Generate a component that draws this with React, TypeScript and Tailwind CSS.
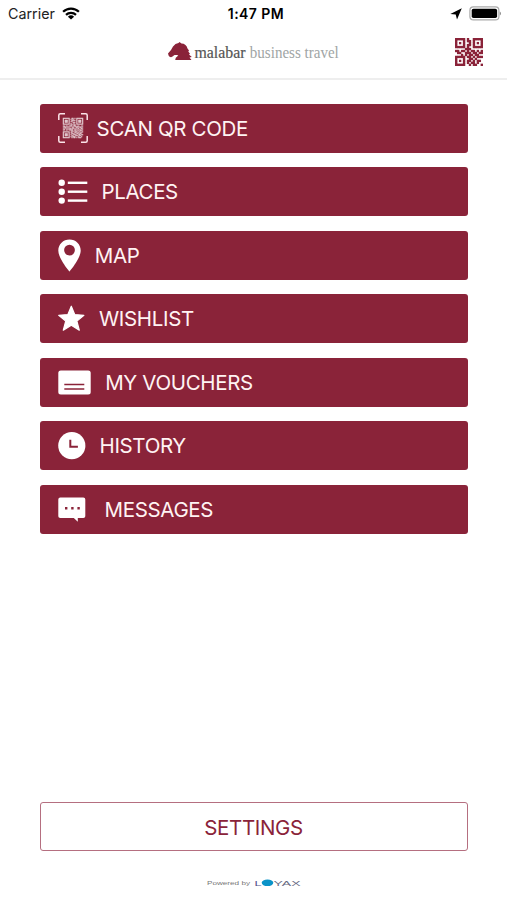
import type { ReactNode } from "react";

const SCAN_ROWS = [
  "111111100110101111111",
  "100000101010001000001",
  "101110100111101011101",
  "101110101100001011101",
  "101110100011101011101",
  "100000101001001000001",
  "111111101010101111111",
  "000000001101100000000",
  "110110111001110110011",
  "011001000110011101100",
  "101110110011001010111",
  "010001011110110110010",
  "110110110100101001101",
  "000000001110110110110",
  "111111100101011001001",
  "100000101100110110110",
  "101110100111001101100",
  "101110101001110011011",
  "101110100110011101100",
  "100000101011100010010",
  "111111100101101011100",
];

const HEADER_ROWS = [
  "11111010011111",
  "10001011010001",
  "10101001010101",
  "10001011010001",
  "11111010011111",
  "00000111000000",
  "11011010110101",
  "01100111011011",
  "00010101101100",
  "11111011010111",
  "10001001101000",
  "10101011010110",
  "10001010110100",
  "11111001011001",
];

function QrModules({ rows, size = 1.04 }: { rows: string[]; size?: number }) {
  return (
    <>
      {rows.map((row, y) =>
        row.split("").map((cell, x) =>
          cell === "1" ? <rect key={`${x}-${y}`} x={x} y={y} width={size} height={size} /> : null
        )
      )}
    </>
  );
}

function ScanIcon() {
  return (
    <svg width="30" height="30" viewBox="0 0 30 30" fill="white">
      <path
        d="M.8 7V2.3Q.8.8 2.3.8H7M23 .8h4.700q1.500 0 1.500 1.500V7M29.200 23v4.700q0 1.500-1.500 1.500H23M7 29.200H2.300Q.8 29.200.8 27.700V23"
        fill="none"
        stroke="#fbe3e8"
        strokeWidth="1.500"
      />
      <g transform="translate(4.800 4.800) scale(.97)">
        <QrModules rows={SCAN_ROWS} />
      </g>
    </svg>
  );
}

function ListIcon() {
  return (
    <svg width="30" height="26" viewBox="0 0 30 26" fill="white">
      {[3.8, 12.7, 21.6].map((y) => (
        <g key={y}>
          <circle cx="3.700" cy={y} r="3.200" />
          <rect x="9.800" y={y - 1.2} width="19.500" height="2.400" />
        </g>
      ))}
    </svg>
  );
}

function PinIcon() {
  return (
    <svg width="23" height="33" viewBox="0 0 23 33" fill="white">
      <path
        fillRule="evenodd"
        d="M11.500.5C5.200.5.300 5.400.300 11.500.300 19.500 11.500 32.500 11.500 32.500S22.700 19.500 22.700 11.500C22.700 5.400 17.800.5 11.500.5Zm0 5.200a5.400 5.400 0 1 1 0 10.800 5.400 5.400 0 0 1 0-10.800Z"
      />
    </svg>
  );
}

function StarIcon() {
  return (
    <svg width="27" height="27" viewBox="0 0 27 27" fill="white" stroke="white" strokeWidth="1.200" strokeLinejoin="round">
      <path d="M13.300 1.200 16.700 9.600 25.900 10.300 18.900 16.100 21.300 25.200 13.300 20.300 5.300 25.200 7.700 16.100.7 10.300 9.900 9.600Z" />
    </svg>
  );
}

function VoucherIcon() {
  return (
    <svg width="33" height="25" viewBox="0 0 33 25">
      <rect x=".3" y=".6" width="32.400" height="23.800" rx="2.500" fill="white" />
      <path d="M6.300 14.500h20M6.300 19h20" stroke="#8a2339" strokeWidth="1.500" />
    </svg>
  );
}

function ClockIcon() {
  return (
    <svg width="28" height="28" viewBox="0 0 28 28">
      <circle cx="13.800" cy="13.700" r="13.600" fill="white" />
      <path d="M12.300 7.700v7h7.600" fill="none" stroke="#8a2339" strokeWidth="2" />
    </svg>
  );
}

function MessageIcon() {
  return (
    <svg width="28" height="25" viewBox="0 0 28 25">
      <path d="M2.300.5h23q2 0 2 2v16.700q0 1.800-2 1.800h-5.500v3.700L15.800 21H2.300Q.3 21 .3 19.200V2.500q0-2 2-2Z" fill="white" />
      <path d="M7 10h2.400v2.400H7zM13.200 10h2.400v2.400h-2.400zM19.400 10h2.400v2.400h-2.400z" fill="#8a2339" />
    </svg>
  );
}

type MenuItem = {
  label: string;
  icon: ReactNode;
  gap: string;
};

const menu: MenuItem[] = [
  { label: "SCAN QR CODE", icon: <ScanIcon />, gap: "gap-[8.6px]" },
  { label: "PLACES", icon: <ListIcon />, gap: "gap-[13.4px]" },
  { label: "MAP", icon: <PinIcon />, gap: "gap-[13.8px]" },
  { label: "WISHLIST", icon: <StarIcon />, gap: "gap-[14px]" },
  { label: "MY VOUCHERS", icon: <VoucherIcon />, gap: "gap-[14.2px]" },
  { label: "HISTORY", icon: <ClockIcon />, gap: "gap-[13.5px]" },
  { label: "MESSAGES", icon: <MessageIcon />, gap: "gap-[18.5px]" },
];

function StatusBar() {
  return (
    <div className="grid h-[27px] grid-cols-3 items-center pl-[8px] pr-[6px] text-black">
      <div className="flex items-center gap-[7px] pt-px text-[14.300px] leading-none text-[#222]">
        <span>Carrier</span>
        <svg width="18" height="13" viewBox="0 0 18 13" fill="none" stroke="black" strokeWidth="2.200">
          <path d="M1.100 4.800a11.300 11.300 0 0 1 15.800 0M4 7.900a7.200 7.200 0 0 1 10 0" />
          <path d="M9 12.600 5.900 9.700a4.600 4.600 0 0 1 6.200 0Z" fill="black" stroke="none" />
        </svg>
      </div>
      <div className="pt-px pl-[3px] text-center text-[14px] font-semibold leading-none tracking-[0.45px]">1:47 PM</div>
      <div className="flex items-center justify-end gap-[7px]">
        <svg width="12" height="12" viewBox="0 0 12 12">
          <path d="M11.800.3 7 11.500 5.700 6.600.3 5.900Z" />
        </svg>
        <svg width="32" height="15" viewBox="0 0 32 15">
          <rect x=".9" y=".9" width="29" height="13" rx="3.500" fill="white" stroke="#aaa" strokeWidth="1.200" />
          <rect x="2.700" y="2.700" width="25.400" height="9.400" rx="1.800" />
          <path d="M30.800 5.500v4q1-.7 1-2T30.800 5.500Z" fill="#777" />
        </svg>
      </div>
    </div>
  );
}

function Logo() {
  return (
    <svg width="175" height="24" viewBox="0 0 175 24" className="overflow-visible font-['Liberation_Serif',serif]">
      <path
        d="M1 13.500 4 10 6 6.500 8.500 4 11.500 3 12.500 2 14.500 3.500C17.500 3.500 20 5.500 20.500 8.500L22 10.500 21.300 11.500 23 13.700 22 14.400 24.800 17 22.500 17.500 24.500 20H8.200L8.800 17.800 11.300 15.500 10 15 7.500 15 5.500 16.600 4 17.200 2.600 16.800 1.700 15.700Z"
        fill="#8a2339"
      />
      <text x="27.500" y="17.800" fontSize="16.500" fill="#555" stroke="#555" strokeWidth=".2" textLength="51" lengthAdjust="spacingAndGlyphs">
        malabar
      </text>
      <text x="82.800" y="17.800" fontSize="16.500" fill="#a0a5a5" textLength="89" lengthAdjust="spacingAndGlyphs">
        business travel
      </text>
    </svg>
  );
}

function PoweredBy() {
  return (
    <svg width="96" height="10" viewBox="0 0 96 10" className="font-['Liberation_Sans',sans-serif]">
      <text x="1" y="7.300" fontSize="6" fill="#777" textLength="43" lengthAdjust="spacingAndGlyphs">
        Powered by
      </text>
      <text x="48.500" y="7.800" fontSize="8" fill="#55558a" textLength="7" lengthAdjust="spacingAndGlyphs">
        L
      </text>
      <ellipse cx="61.500" cy="4.800" rx="5.800" ry="3.300" fill="#0a93c8" />
      <text x="67.500" y="7.800" fontSize="8" fill="#666a82" textLength="27" lengthAdjust="spacingAndGlyphs">
        YAX
      </text>
    </svg>
  );
}

export default function App() {
  return (
    <div className="flex h-[900px] w-[507px] flex-col bg-white font-['Inter',sans-serif]">
      <header className="h-[80px] border-b-2 border-[#eeeeee]">
        <StatusBar />
        <div className="flex h-[50px] items-center pl-[167px] pr-[24px]">
          <Logo />
          <svg width="28" height="28" viewBox="0 0 14.200 14.200" fill="#8a2339" className="ml-auto">
            <QrModules rows={HEADER_ROWS} size={1.2} />
          </svg>
        </div>
      </header>

      <nav className="flex flex-col gap-[14.500px] px-[39.500px] pt-[23.500px]">
        {menu.map((item) => (
          <button
            key={item.label}
            className={`flex h-[49px] items-center rounded-[3px] bg-[#8a2339] pl-[18.500px] text-[20.500px] leading-none text-[#fff3f3] ${item.gap}`}
          >
            {item.icon}
            <span className="pt-[2px] tracking-[-0.34px]">{item.label}</span>
          </button>
        ))}
      </nav>

      <footer className="mt-auto flex flex-col items-center px-[39.500px] pb-[12px]">
        <button className="mb-[27px] h-[49px] w-full rounded-[3px] border border-[#b56f80] pt-[3px] text-[20.500px] leading-none tracking-[-0.34px] text-[#8a2339]">
          SETTINGS
        </button>
        <PoweredBy />
      </footer>
    </div>
  );
}
